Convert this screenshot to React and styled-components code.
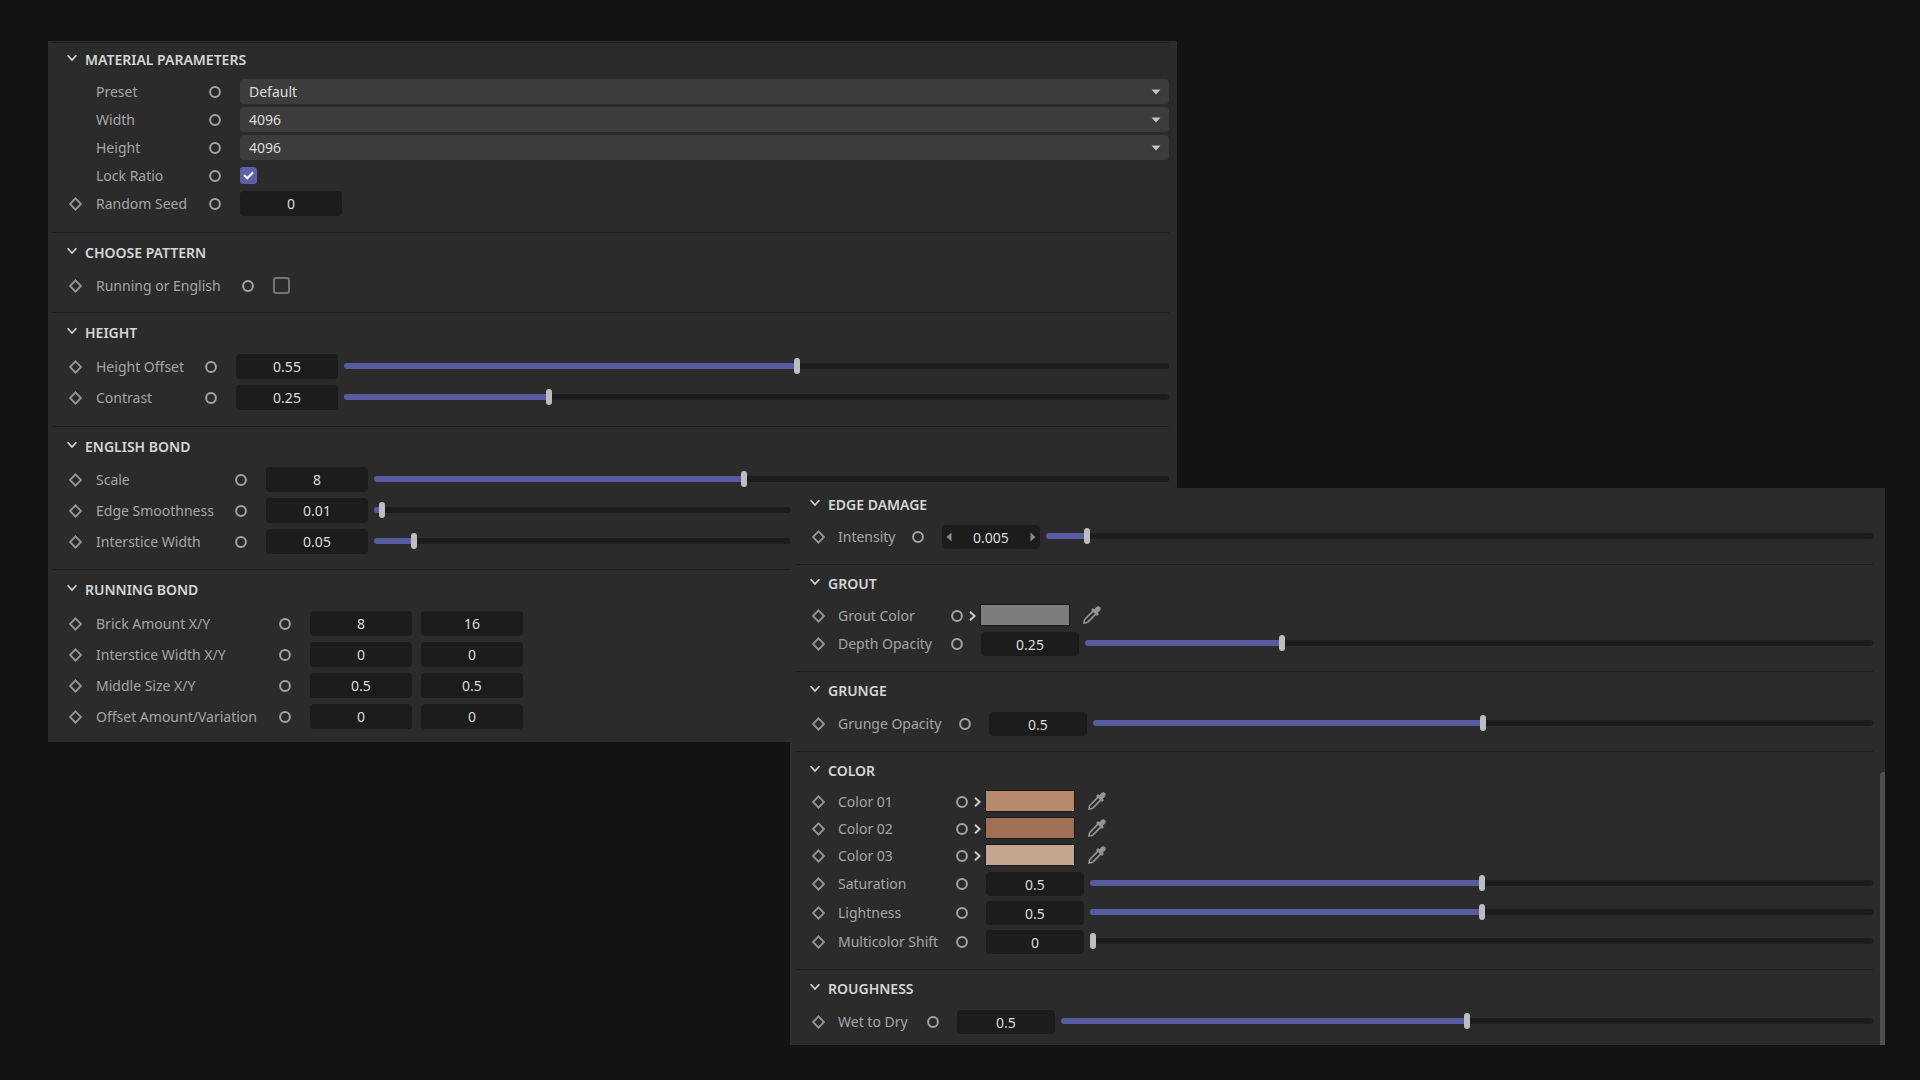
import React, { useId, useState } from "react";
import styled, { createGlobalStyle } from "styled-components";

const GlobalStyle = createGlobalStyle`
  *, *::before, *::after { box-sizing: border-box; }
  body {
    margin: 0;
    background: #131313;
    color: #a6a6a6;
    font-family: "Noto Sans", "Open Sans", sans-serif;
    font-size: 14px;
  }
  input, select, button { font: inherit; color: inherit; }
`;

const Stage = styled.main`
  display: grid;
  grid-template-columns: 742fr 387fr 708fr;
  align-items: start;
  min-height: 100vh;
  padding: 41px 35px 35px 48px;
`;

const Panel = styled.div`
  display: flex;
  background: #2b2b2b;
`;

const BackPanel = styled(Panel)`
  grid-area: 1 / 1 / 2 / 3;
  padding: 1px 8px 0 4px;
`;

const FrontPanel = styled(Panel)`
  grid-area: 1 / 2 / 2 / 4;
  margin-top: 447px;
  padding-left: 6px;
`;

const Sections = styled.div`
  flex: 1;
  min-width: 0;
`;

const Gutter = styled.div`
  display: flex;
  align-items: flex-end;
  width: 5px;
  margin-left: 7px;
`;

const ScrollThumb = styled.div`
  width: 5px;
  height: 49%;
  background: #4e4e4e;
  border-top-left-radius: 3px;
`;

const SectionBox = styled.section`
  padding-bottom: ${(p) => p.$bottom}px;
  border-top: ${(p) => (p.$plain ? "0" : "1px solid #1d1d1d")};
`;

const Title = styled.h2`
  margin: 0;
  font-size: 14px;
  font-weight: 600;
  line-height: 20px;
`;

const Toggle = styled.button`
  display: flex;
  align-items: center;
  gap: 8px;
  height: ${(p) => p.$height}px;
  padding: 0 0 0 ${(p) => (p.$compact ? 14 : 15)}px;
  border: 0;
  background: none;
  color: #d6d6d6;
  cursor: pointer;

  svg { margin-bottom: 4px; }
`;

const Rows = styled.div`
  display: flex;
  flex-direction: column;
  gap: ${(p) => p.$gap}px;
  padding-top: ${(p) => p.$top}px;
`;

const RowBox = styled.div`
  display: grid;
  grid-template-columns: 13px ${(p) => p.$label}px 12px minmax(0, 1fr);
  align-items: center;
  height: ${(p) => p.$height}px;
  padding-left: ${(p) => (p.$compact ? 16 : 17)}px;
`;

const Label = styled.label`
  padding-left: ${(p) => (p.$compact ? 13 : 14)}px;
  line-height: 20px;
  white-space: nowrap;
`;

const Controls = styled.div`
  display: flex;
  align-items: center;
  gap: ${(p) => p.$gap}px;
  padding-left: ${(p) => (p.$compact ? 18 : 19)}px;
`;

const NumberBox = styled.input`
  flex: none;
  width: ${(p) => (p.$compact ? 98 : 102)}px;
  height: ${(p) => (p.$compact ? 24 : 25)}px;
  padding: 0;
  border: 0;
  border-radius: 4px;
  background: #1c1c1c;
  color: #dcdcdc;
  text-align: center;
  outline: none;
`;

const Stepper = styled.div`
  display: flex;
  align-items: center;
  flex: none;
  width: 98px;
  border-radius: 4px;
  background: #1c1c1c;

  input { flex: 1; min-width: 0; }
`;

const StepButton = styled.button`
  display: flex;
  padding: 0 4px;
  border: 0;
  background: none;
  color: #8a8a8a;
`;

const Range = styled.input`
  flex: 1;
  min-width: 0;
  height: 16px;
  margin: 0 0 2px;
  appearance: none;
  background: none;
  outline: none;

  &::-webkit-slider-runnable-track {
    height: 6px;
    border-radius: 3px;
    background: linear-gradient(to right, #575ca0 var(--fill), #1c1c1c var(--fill));
  }

  &::-webkit-slider-thumb {
    appearance: none;
    width: 6px;
    height: 16px;
    margin-top: -5px;
    border-radius: 3px;
    background: #bdbdbd;
  }
`;

const SelectWrap = styled.div`
  display: grid;
  flex: 1;
  align-items: center;

  > * { grid-area: 1 / 1; }
  > svg { justify-self: end; margin: 1px 8px 0 0; pointer-events: none; }
`;

const SelectBox = styled.select`
  width: 100%;
  height: 25px;
  padding: 0 9px;
  border: 0;
  border-radius: 4px;
  appearance: none;
  background: #3c3c3c;
  color: #dcdcdc;
  outline: none;
`;

const CheckWrap = styled.span`
  display: grid;
  place-items: center;

  > * { grid-area: 1 / 1; }
  > svg { pointer-events: none; }
`;

const CheckBox = styled.input`
  width: 17px;
  height: 17px;
  margin: 0;
  appearance: none;
  border: 2px solid #747474;
  border-radius: 3px;

  &:checked { border-color: #5b60a9; background: #5b60a9; }
  &:not(:checked) + svg { display: none; }
`;

const IconButton = styled.button`
  display: flex;
  padding: 0;
  border: 0;
  background: none;
  color: ${(p) => p.$color};
`;

const ColorControls = styled.div`
  display: grid;
  grid-template: 24px / 7px 90px 27px;
  align-items: center;
  column-gap: 4px;
  padding-left: 6px;

  > :last-child { padding: 0 0 2px 9px; }
`;

const Swatch = styled.input`
  align-self: start;
  width: 90px;
  height: 22px;
  padding: 0;
  border: 1px solid #191919;
  border-radius: 1px;
  appearance: none;
  background: none;

  &::-webkit-color-swatch-wrapper { padding: 0; }
  &::-webkit-color-swatch { border: 0; border-radius: 0; }
`;

const Chevron = () => (
  <svg width="10" height="8" viewBox="0 0 10 8" fill="none" stroke="currentColor" strokeWidth="1.7" aria-hidden="true">
    <path d="M0.6 1.2 5 6 9.4 1.2" />
  </svg>
);

const Diamond = () => (
  <svg width="13" height="14" viewBox="0 0 13 14" fill="none" stroke="#969696" strokeWidth="1.8" aria-hidden="true">
    <path d="M6.5 1.4 12 7 6.5 12.6 1 7Z" />
  </svg>
);

const Ring = () => (
  <svg width="12" height="12" viewBox="0 0 12 12" fill="none" stroke="#a4a4a4" strokeWidth="2" aria-hidden="true">
    <circle cx="6" cy="6" r="4.9" />
  </svg>
);

const Caret = () => (
  <svg width="10" height="6" viewBox="0 0 10 6" fill="#c4c4c4" aria-hidden="true">
    <path d="M0.5 0.5h9L5 5.5Z" />
  </svg>
);

const Tick = () => (
  <svg width="11" height="9" viewBox="0 0 11 9" fill="none" stroke="#fff" strokeWidth="2.1" aria-hidden="true">
    <path d="M1 4 4.3 7.2 10 1.2" />
  </svg>
);

const Arrow = () => (
  <svg width="7" height="10" viewBox="0 0 7 10" fill="none" stroke="currentColor" strokeWidth="1.9" aria-hidden="true">
    <path d="M1 0.8 5.6 5 1 9.2" />
  </svg>
);

const StepArrow = ({ left }) => (
  <svg width="6" height="10" viewBox="0 0 6 10" fill="currentColor" aria-hidden="true">
    <path d={left ? "M5.5 0.5v9L0.5 5Z" : "M0.5 0.5v9L5.5 5Z"} />
  </svg>
);

const Dropper = () => (
  <svg width="18" height="18" viewBox="0 0 18 18" fill="none" stroke="currentColor" aria-hidden="true">
    <path strokeWidth="1.7" d="M10.3 4.9 2.2 13Q1.1 14.2 1 17 3.8 16.9 5 15.8L13.1 7.7" />
    <path strokeWidth="2.6" d="M9 3 15 9" />
    <path fill="currentColor" strokeWidth="1.2" d="M11 4.4 13.6 1.6Q15.2 0.2 16.6 1.4 17.8 2.8 16.4 4.4L13.6 7Z" />
  </svg>
);

const Slider = ({ name, at }) => {
  const [value, setValue] = useState(at);
  return (
    <Range
      type="range"
      min="0"
      max="1000"
      aria-label={`${name} slider`}
      value={value}
      onChange={(e) => setValue(Number(e.target.value))}
      style={{ "--fill": `${value / 10}%` }}
    />
  );
};

const Row = ({ row, label, fieldRow, compact }) => {
  const id = useId();
  const { name, kind, values = [], at } = row;
  const height = kind === "color" ? 24 : fieldRow || (compact ? 24 : 25);
  return (
    <RowBox $label={label} $height={height} $compact={compact}>
      {row.noKey ? <span /> : <Diamond />}
      <Label htmlFor={id} $compact={compact}>{name}</Label>
      <Ring />
      {kind === "color" ? (
        <ColorControls>
          <IconButton type="button" aria-label={`Expand ${name}`} $color="#cfcfcf"><Arrow /></IconButton>
          <Swatch id={id} type="color" defaultValue={row.color} />
          <IconButton type="button" aria-label={`Pick ${name}`} $color="#949494"><Dropper /></IconButton>
        </ColorControls>
      ) : (
        <Controls $gap={values.length > 1 ? 9 : 6} $compact={compact}>
          {kind === "select" && (
            <SelectWrap>
              <SelectBox id={id} defaultValue={row.value}><option>{row.value}</option></SelectBox>
              <Caret />
            </SelectWrap>
          )}
          {kind === "check" && (
            <CheckWrap>
              <CheckBox id={id} type="checkbox" defaultChecked={row.checked} />
              <Tick />
            </CheckWrap>
          )}
          {kind === "stepper" && (
            <Stepper>
              <StepButton type="button" aria-label="Decrease"><StepArrow left /></StepButton>
              <NumberBox id={id} type="text" defaultValue={row.value} $compact />
              <StepButton type="button" aria-label="Increase"><StepArrow /></StepButton>
            </Stepper>
          )}
          {values.map((v, i) => (
            <NumberBox
              key={i}
              id={i === 0 ? id : undefined}
              aria-label={i === 0 ? undefined : `${name} second value`}
              type="text"
              defaultValue={v}
              $compact={compact}
            />
          ))}
          {at !== undefined && <Slider name={name} at={at} />}
        </Controls>
      )}
    </RowBox>
  );
};

const Section = ({ title, label, rows, compact, plain, head, fieldRow, gap = 6, top = 1, bottom = 15 }) => {
  const [open, setOpen] = useState(true);
  return (
    <SectionBox $bottom={bottom} $plain={plain}>
      <Title>
        <Toggle
          type="button"
          aria-expanded={open}
          onClick={() => setOpen(!open)}
          $compact={compact}
          $height={head || (compact ? 38 : 40)}
        >
          <Chevron />
          {title}
        </Toggle>
      </Title>
      {open && (
        <Rows $gap={gap} $top={top}>
          {rows.map((row) => <Row key={row.name} row={row} label={label} fieldRow={fieldRow} compact={compact} />)}
        </Rows>
      )}
    </SectionBox>
  );
};

const BACK = [
  {
    title: "Material Parameters", label: 127, head: 34, gap: 3, top: 2, bottom: 16,
    rows: [
      { name: "Preset", kind: "select", value: "Default", noKey: true },
      { name: "Width", kind: "select", value: "4096", noKey: true },
      { name: "Height", kind: "select", value: "4096", noKey: true },
      { name: "Lock Ratio", kind: "check", checked: true, noKey: true },
      { name: "Random Seed", values: ["0"] },
    ],
  },
  { title: "Choose Pattern", label: 160, top: 0, bottom: 14, rows: [{ name: "Running or English", kind: "check" }] },
  {
    title: "Height", label: 123, bottom: 16,
    rows: [
      { name: "Height Offset", values: ["0.55"], at: 549 },
      { name: "Contrast", values: ["0.25"], at: 247 },
    ],
  },
  {
    title: "English Bond", label: 153, top: 0,
    rows: [
      { name: "Scale", values: ["8"], at: 465 },
      { name: "Edge Smoothness", values: ["0.01"], at: 6 },
      { name: "Interstice Width", values: ["0.05"], at: 47 },
    ],
  },
  {
    title: "Running Bond", label: 197, bottom: 13,
    rows: [
      { name: "Brick Amount X/Y", values: ["8", "16"] },
      { name: "Interstice Width X/Y", values: ["0", "0"] },
      { name: "Middle Size X/Y", values: ["0.5", "0.5"] },
      { name: "Offset Amount/Variation", values: ["0", "0"] },
    ],
  },
];

const FRONT = [
  {
    title: "Edge Damage", label: 87, plain: true, head: 34, top: 3,
    rows: [{ name: "Intensity", kind: "stepper", value: "0.005", at: 46 }],
  },
  {
    title: "Grout", label: 126, gap: 4,
    rows: [
      { name: "Grout Color", kind: "color", color: "#7d7d7d" },
      { name: "Depth Opacity", values: ["0.25"], at: 248 },
    ],
  },
  { title: "Grunge", label: 134, top: 2, rows: [{ name: "Grunge Opacity", values: ["0.5"], at: 500 }] },
  {
    title: "Color", label: 131, gap: 3, top: 0, bottom: 14, fieldRow: 26,
    rows: [
      { name: "Color 01", kind: "color", color: "#b6896d" },
      { name: "Color 02", kind: "color", color: "#a06f56" },
      { name: "Color 03", kind: "color", color: "#c4a58e" },
      { name: "Saturation", values: ["0.5"], at: 500 },
      { name: "Lightness", values: ["0.5"], at: 500 },
      { name: "Multicolor Shift", values: ["0"], at: 0 },
    ],
  },
  { title: "Roughness", label: 102, top: 2, bottom: 11, rows: [{ name: "Wet to Dry", values: ["0.5"], at: 500 }] },
];

export default function App() {
  return (
    <>
      <GlobalStyle />
      <Stage>
        <BackPanel>
          <Sections>
            {BACK.map((s) => <Section key={s.title} {...s} title={s.title.toUpperCase()} />)}
          </Sections>
        </BackPanel>
        <FrontPanel>
          <Sections>
            {FRONT.map((s) => <Section key={s.title} {...s} title={s.title.toUpperCase()} compact />)}
          </Sections>
          <Gutter><ScrollThumb /></Gutter>
        </FrontPanel>
      </Stage>
    </>
  );
}
